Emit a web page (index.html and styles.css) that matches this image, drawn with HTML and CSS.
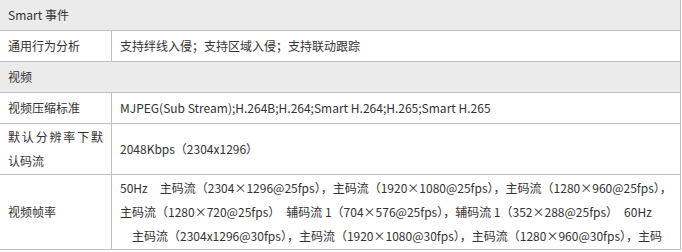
FILE: index.html
```html
<!DOCTYPE html>
<html lang="zh-CN">
<head>
<meta charset="utf-8">
<link rel="stylesheet" href="styles.css">
</head>
<body>
<table class="spec">
  <colgroup><col class="c-key"><col class="c-val"></colgroup>
  <tr class="group"><td colspan="2">Smart 事件</td></tr>
  <tr><td class="key">通用行为分析</td><td class="val">支持绊线入侵；支持区域入侵；支持联动跟踪</td></tr>
  <tr class="group"><td colspan="2">视频</td></tr>
  <tr><td class="key">视频压缩标准</td><td class="val">MJPEG(Sub Stream);H.264B;H.264;Smart H.264;H.265;Smart H.265</td></tr>
  <tr><td class="key justify">默认分辨率下默认码流</td><td class="val">2048Kbps（2304x1296）</td></tr>
  <tr><td class="key">视频帧率</td><td class="val">
    <span class="line">50Hz　主码流（2304×1296@25fps），主码流（1920×1080@25fps），主码流（1280×960@25fps），</span>
    <span class="line">主码流（1280×720@25fps）　辅码流 1（704×576@25fps），辅码流 1（352×288@25fps）　60Hz</span>
    <span class="line">　主码流（2304x1296@30fps），主码流（1920×1080@30fps），主码流（1280×960@30fps），主码</span>
  </td></tr>
</table>
</body>
</html>
```
FILE: styles.css
```css
html, body {
  margin: 0;
  padding: 0;
  background: #fff;
}
body {
  font-family: "Noto Sans CJK SC", "Noto Sans", sans-serif;
  font-size: 12px;
  color: #333;
  overflow: hidden;
}
.spec {
  border-collapse: collapse;
  width: 682px;
  margin: -1px 0 0 -1px;
  table-layout: fixed;
}
.c-key {
  width: 112px;
}
.spec td {
  border: 1px solid #c0c0c0;
  padding: 1px 8px;
  height: 31px;
  line-height: 24px;
  vertical-align: middle;
  box-sizing: border-box;
}
.spec .group td {
  background: #ebebeb;
}
.spec .justify {
  text-align: justify;
}
.line {
  display: block;
  white-space: nowrap;
}
```
